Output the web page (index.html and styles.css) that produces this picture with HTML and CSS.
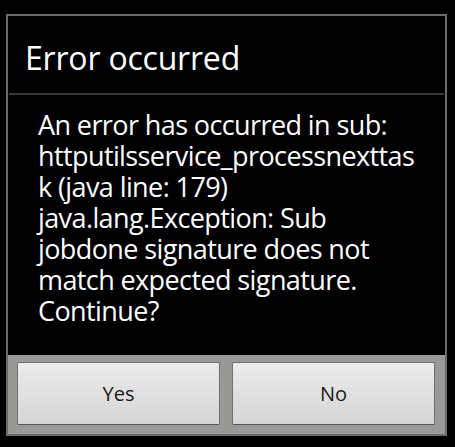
FILE: index.html
```html
<!DOCTYPE html>
<html lang="en">
<head>
<meta charset="UTF-8" />
<meta name="viewport" content="width=device-width, initial-scale=1.0"/>
<title>Error occurred</title>
<link rel="stylesheet" href="styles.css">
</head>
<body>

<div class="dialog">
    <div class="dialog-title">Error occurred</div>
    <div class="dialog-message">
        An error has occurred in sub: httputilsservice_processnexttask (java line: 179) java.lang.Exception: Sub jobdone signature does not match expected signature. Continue?
    </div>
    <div class="dialog-buttons">
        <button class="btn">Yes</button>
        <button class="btn">No</button>
    </div>
</div>

</body>
</html>
```

FILE: styles.css
```css
body {
    margin: 0;
    background: #000;
    font-family: "Open Sans", "Noto Sans", "DejaVu Sans", sans-serif;
}

.dialog {
    margin: 14px 8px 0 6px;
    width: 437px;
    border: 2px solid #6b6b6b;
    background: #000;
    display: flex;
    flex-direction: column;
}

.dialog-title {
    color: #fff;
    font-size: 32px;
    line-height: 40px;
    letter-spacing: -0.2px;
    padding: 22px 16px 15px 16px;
    border-bottom: 2px solid #383838;
    margin: 0 1px;
}

.dialog-message {
    color: #fff;
    font-size: 27px;
    line-height: 31px;
    letter-spacing: -0.6px;
    padding: 14px 21px 29px 30px;
    overflow-wrap: anywhere;
}

.dialog-buttons {
    background: #999a98;
    display: flex;
    gap: 12px;
    padding: 7px 10px 9px 9px;
}

.btn {
    flex: 1;
    height: 63px;
    border: 1px solid #707070;
    border-bottom-color: #555;
    border-radius: 2px;
    background: linear-gradient(#ebebeb, #d5d5d5);
    font-family: inherit;
    font-size: 20px;
    color: #1a1a1a;
    padding: 0;
}
```
